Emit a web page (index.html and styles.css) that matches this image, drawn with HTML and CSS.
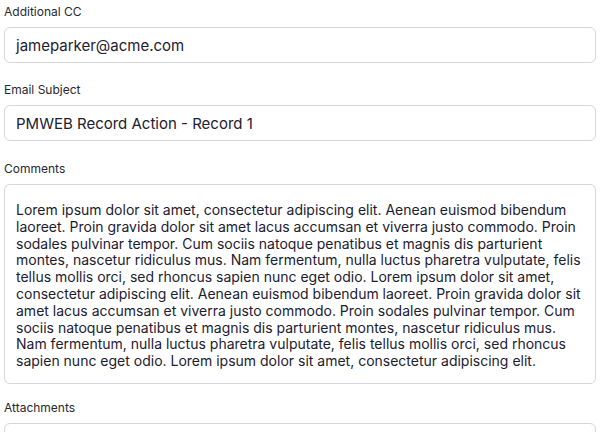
FILE: index.html
```html
<!DOCTYPE html>
<html>
<head>
<meta charset="utf-8">
<link rel="stylesheet" href="styles.css">
</head>
<body>
<div class="form">
  <div class="field">
    <div class="label">Additional CC</div>
    <div class="input">jameparker@acme.com</div>
  </div>
  <div class="field">
    <div class="label">Email Subject</div>
    <div class="input">PMWEB Record Action - Record 1</div>
  </div>
  <div class="field field-comments">
    <div class="label">Comments</div>
    <div class="textarea">Lorem ipsum dolor sit amet, consectetur adipiscing elit. Aenean euismod bibendum laoreet. Proin gravida dolor sit amet lacus accumsan et viverra justo commodo. Proin sodales pulvinar tempor. Cum sociis natoque penatibus et magnis dis parturient montes, nascetur ridiculus mus. Nam fermentum, nulla luctus pharetra vulputate, felis tellus mollis orci, sed rhoncus sapien nunc eget odio. Lorem ipsum dolor sit amet, consectetur adipiscing elit. Aenean euismod bibendum laoreet. Proin gravida dolor sit amet lacus accumsan et viverra justo commodo. Proin sodales pulvinar tempor. Cum sociis natoque penatibus et magnis dis parturient montes, nascetur ridiculus mus. Nam fermentum, nulla luctus pharetra vulputate, felis tellus mollis orci, sed rhoncus sapien nunc eget odio. Lorem ipsum dolor sit amet, consectetur adipiscing elit.</div>
  </div>
  <div class="field field-attach">
    <div class="label">Attachments</div>
    <div class="input"></div>
  </div>
</div>
</body>
</html>
```
FILE: styles.css
```css
html, body {
  margin: 0;
  padding: 0;
  background: #ffffff;
}
body {
  font-family: Inter, "Noto Sans", sans-serif;
  overflow: hidden;
  height: 432px;
}
.form {
  display: flex;
  flex-direction: column;
  gap: 18px;
  padding: 3px 4px 0 4px;
}
.field {
  display: flex;
  flex-direction: column;
  gap: 7px;
}
.field-comments {
  margin-top: 1px;
}
.field-attach {
  margin-top: -3px;
}
.label {
  font-size: 12px;
  line-height: 17px;
  color: #262833;
}
.input {
  box-sizing: border-box;
  height: 36px;
  border: 1px solid #d4d6dd;
  border-radius: 6px;
  padding: 0 11px;
  display: flex;
  align-items: center;
  font-size: 15px;
  color: #1c2030;
}
.textarea {
  box-sizing: border-box;
  height: 200px;
  border: 1px solid #d4d6dd;
  border-radius: 6px;
  padding: 17px 11px 13px 11px;
  font-size: 14px;
  line-height: 16.8px;
  color: #1c2030;
}
```
